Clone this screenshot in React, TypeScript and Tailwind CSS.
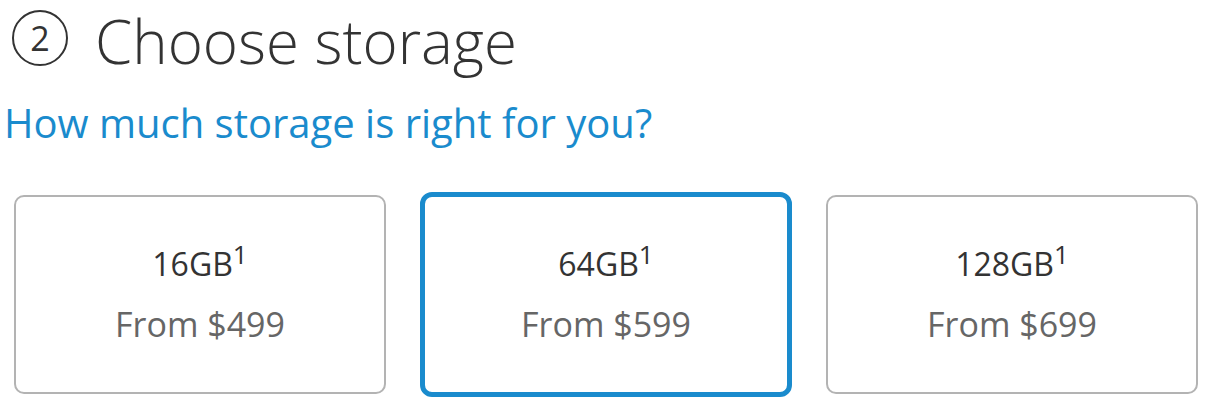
const options = [
  { size: "16GB", price: "$499", selected: false },
  { size: "64GB", price: "$599", selected: true },
  { size: "128GB", price: "$699", selected: false },
];

function StorageCard({ size, price, selected }: { size: string; price: string; selected: boolean }) {
  return (
    <button
      className={
        selected
          ? "flex h-[205px] flex-col items-center justify-center rounded-[12px] border-[5px] border-[#1a8bcd] bg-white"
          : "flex h-[199px] flex-col items-center justify-center rounded-[10px] border-2 border-[#b3b3b3] bg-white"
      }
    >
      <span className="text-[32px] leading-none text-[#333]">
        {size}
        <sup className="relative -top-[12px] text-[26px]">1</sup>
      </span>
      <span className="mt-[27px] text-[34px] leading-none text-[#666]">From {price}</span>
    </button>
  );
}

export default function App() {
  return (
    <div className="h-[408px] w-[1208px] overflow-hidden bg-white font-['Open_Sans',sans-serif]">
      <div className="flex items-start pl-[12px]">
        <div className="mt-[10px] flex h-[56px] w-[56px] items-center justify-center rounded-full border-2 border-[#333]">
          <span className="text-[34px] leading-none text-[#333]">2</span>
        </div>
        <h1 className="ml-[27px] text-[60px] font-light leading-[82px] text-[#333]">Choose storage</h1>
      </div>

      <p className="mt-[13px] pl-[4px] text-[40px] leading-[56px] text-[#1a8bcd]">How much storage is right for you?</p>

      <div className="mt-[41px] grid grid-cols-3 items-center gap-[34px] pl-[14px] pr-[10px]">
        {options.map((o) => (
          <StorageCard key={o.size} {...o} />
        ))}
      </div>
    </div>
  );
}
